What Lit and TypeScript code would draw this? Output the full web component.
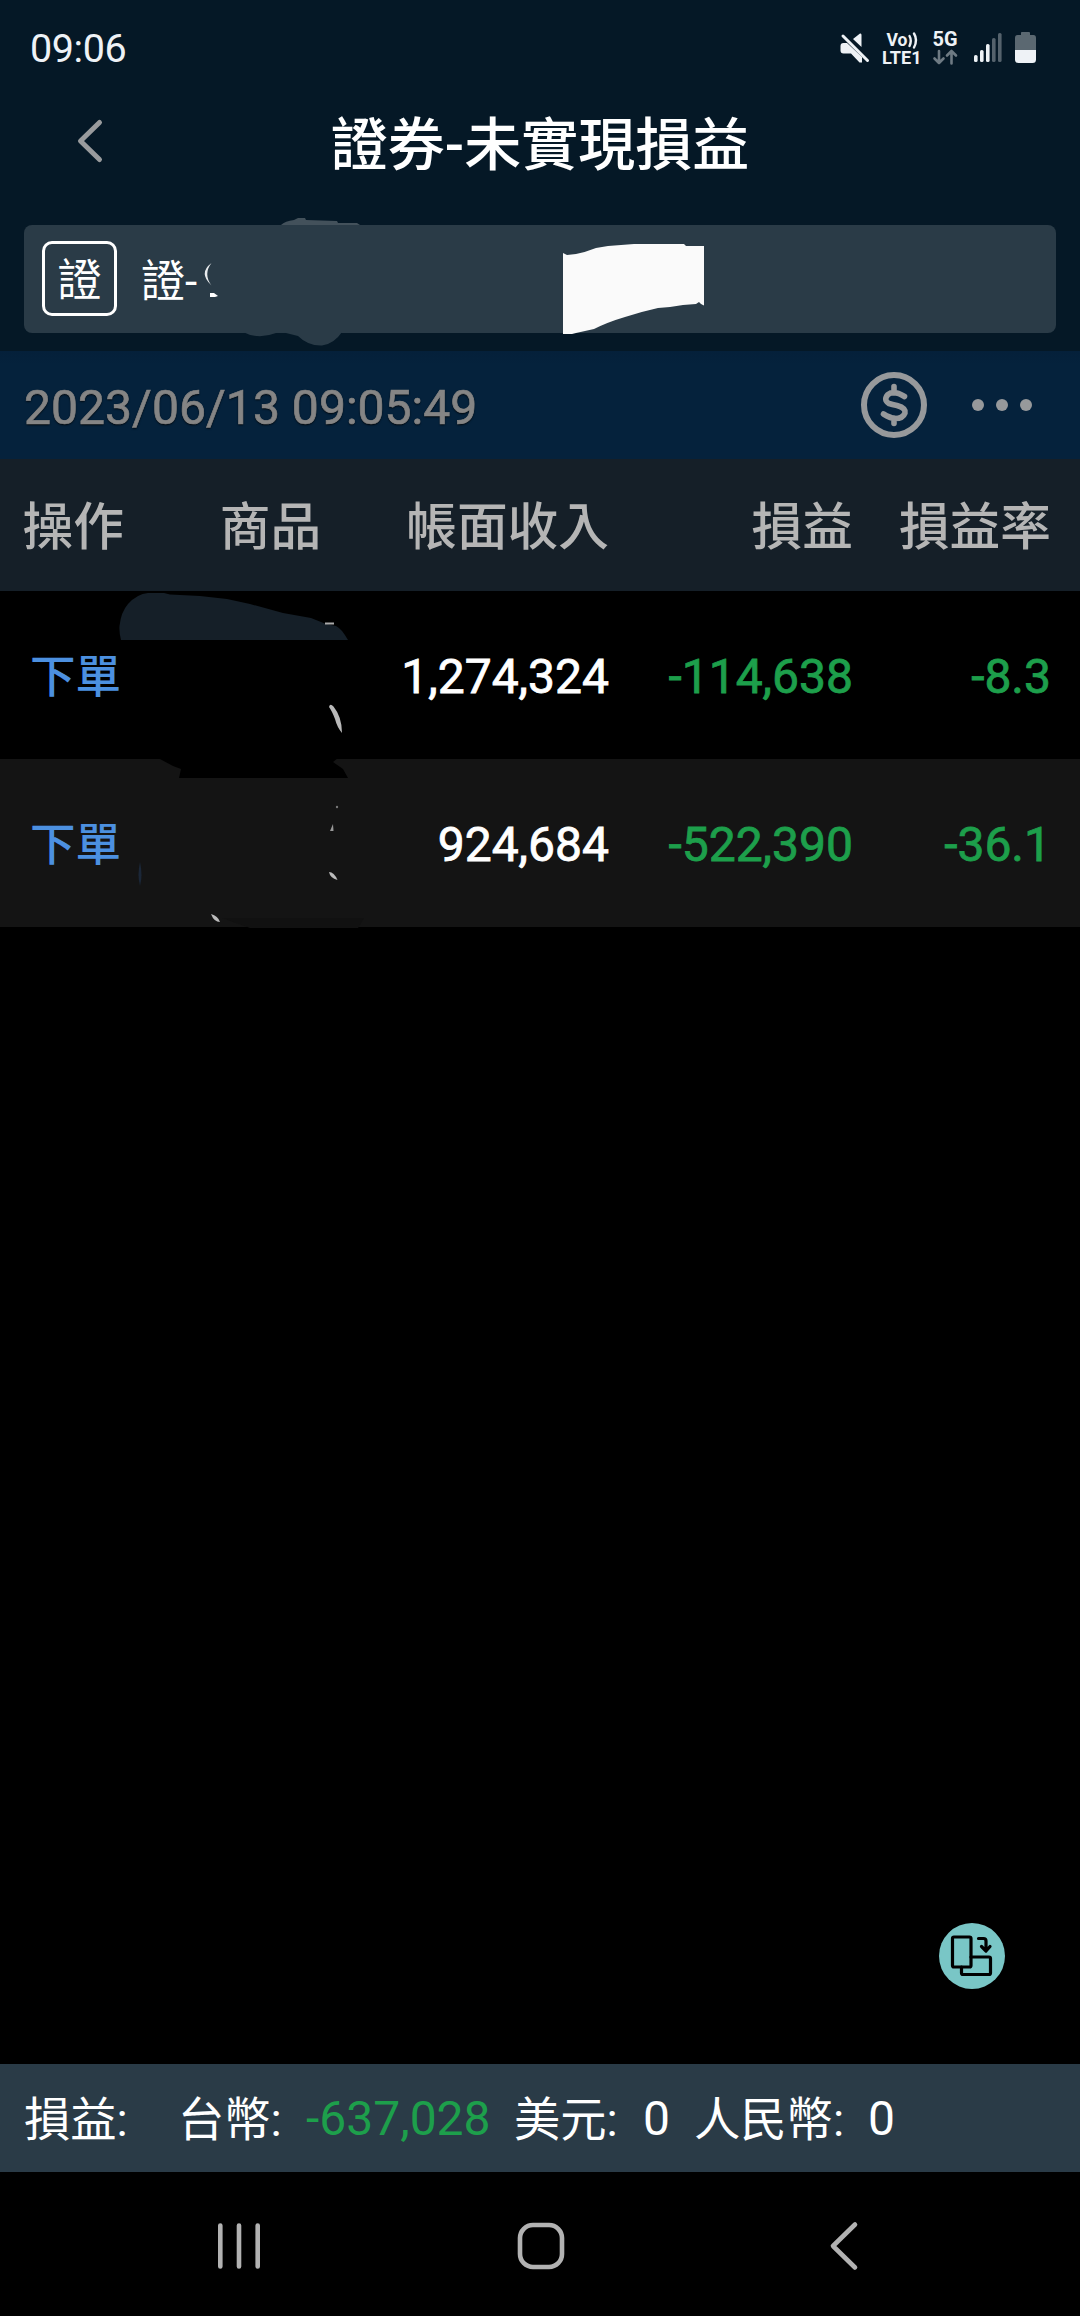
import { LitElement, html, css, svg } from "lit";
import { customElement } from "lit/decorators.js";

interface Holding {
  income: string;
  profit: string;
  rate: string;
}

const HOLDINGS: Holding[] = [
  { income: "1,274,324", profit: "-114,638", rate: "-8.3" },
  { income: "924,684", profit: "-522,390", rate: "-36.1" },
];

const BARS = [
  { x: 0, h: 7, on: true },
  { x: 6, h: 12, on: true },
  { x: 12, h: 18, on: true },
  { x: 18, h: 24, on: false },
  { x: 24, h: 29, on: false },
];

@customElement("status-bar")
export class StatusBar extends LitElement {
  static styles = css`
    :host {
      display: flex;
      height: 96px;
      box-sizing: border-box;
      padding: 2px 40px 0 30px;
      align-items: center;
      justify-content: space-between;
      color: #eef2f6;
    }
    .time {
      font-size: 39.5px;
      letter-spacing: -0.4px;
      line-height: 94px;
    }
    .icons {
      display: block;
      width: 204px;
      height: 48px;
    }
    .label {
      font-family: Roboto, sans-serif;
      font-weight: 700;
      fill: #eef2f6;
    }
  `;

  render() {
    return html`
      <span class="time">09:06</span>
      <svg class="icons" viewBox="836 26 204 48">
        <path
          fill="#eef2f6"
          d="M840.5 47 Q840.5 44 843.5 44 L847 44 L862 58 L862 63.5 L859.5 63.5 L851 54.5 L843.5 54.5 Q840.5 54.5 840.5 51.5Z M853 40 L860 34.5 Q861.5 34 861.5 36 L861.5 48Z"
        />
        <path d="M843 37 L867.5 61.5" stroke="#eef2f6" stroke-width="3" stroke-linecap="round" />
        <text class="label" x="886.5" y="47.3" font-size="18" textLength="21" lengthAdjust="spacingAndGlyphs">Vo</text>
        <path
          d="M909.5 37 Q912 41.5 909.5 47 M914 34.5 Q918 41 914 48.5"
          fill="none"
          stroke="#eef2f6"
          stroke-width="2.4"
          stroke-linecap="round"
        />
        <text class="label" x="882" y="64.500" font-size="18" textLength="39.5" lengthAdjust="spacingAndGlyphs">LTE1</text>
        <text class="label" x="932.5" y="47.3" font-size="19.5" textLength="25" lengthAdjust="spacingAndGlyphs">5G</text>
        <path
          d="M939 52 V64 M934.5 59.5 L939 64 L943.5 59.5 M951.500 64.500 V52 M947 56.500 L951.500 52 L956 56.500"
          fill="none"
          stroke="#6e7a83"
          stroke-width="2.6"
          stroke-linecap="round"
          stroke-linejoin="round"
        />
        ${BARS.map(
          (b) => svg`<rect x=${974 + b.x} y=${63 - b.h} width="3.600" height=${b.h} rx="1.6"
            fill=${b.on ? "#eef2f6" : "#55626c"} />`
        )}
        <path
          fill="#5b6871"
          d="M1021 33.500 Q1021 33 1022 33 L1029 33 Q1030 33 1030 34 L1030 36 L1033.500 36 Q1036 36 1036 39 L1036 52 L1015 52 L1015 39 Q1015 36 1017.500 36 L1021 36Z"
        />
        <path fill="#eef2f6" d="M1015 51 H1036 V60.500 Q1036 64 1032.500 64 H1018.500 Q1015 64 1015 60.500Z" />
      </svg>
    `;
  }
}

@customElement("app-root")
export class AppRoot extends LitElement {
  static styles = css`
    :host {
      display: flex;
      flex-direction: column;
      width: 1080px;
      height: 2316px;
      overflow: hidden;
      background: #000;
      color: #fff;
      font-family: Roboto, "Noto Sans CJK TC", sans-serif;
    }
    svg {
      display: block;
      overflow: visible;
    }
    .top {
      height: 351px;
      background: #051826;
    }
    .titlebar {
      display: grid;
      grid-template-columns: 180px 1fr 180px;
      align-items: center;
      height: 90px;
    }
    .back {
      justify-self: center;
      width: 30px;
      height: 46px;
    }
    .title {
      margin: 0;
      padding-top: 9px;
      text-align: center;
      font-size: 57px;
      font-weight: 500;
      line-height: 81px;
      white-space: nowrap;
    }
    .account {
      position: relative;
      display: flex;
      align-items: center;
      gap: 24px;
      height: 108px;
      margin: 39px 24px 0;
      padding-left: 18px;
      box-sizing: border-box;
      border-radius: 8px;
      background: #2a3b47;
    }
    .badge {
      display: grid;
      place-items: center;
      width: 75px;
      height: 75px;
      box-sizing: border-box;
      padding-top: 5px;
      margin-bottom: 1px;
      border: 3px solid #fff;
      border-radius: 10px;
      font-size: 44px;
      line-height: 60px;
    }
    .name {
      padding-top: 6px;
      font-size: 44px;
      line-height: 75px;
    }
    .patches {
      position: absolute;
      left: -24px;
      top: -225px;
      width: 1080px;
      height: 360px;
    }
    .stamp {
      display: flex;
      align-items: center;
      height: 108px;
      padding: 0 48px 0 24px;
      background: linear-gradient(#05203a, #05223c 14px);
      color: #858585;
    }
    .date {
      flex: 1;
      padding-top: 4px;
      font-size: 48.1px;
      text-shadow: 0 1px 2px #000;
      -webkit-text-stroke: 0.7px #858585;
    }
    .dollar {
      width: 66px;
      height: 66px;
      margin-right: 45px;
    }
    .dots {
      width: 60px;
      height: 12px;
    }
    .row {
      display: grid;
      grid-template-columns: 149px 243px 217px 244px 198px;
      align-items: center;
      height: 168px;
      text-align: right;
      font-size: 48px;
      white-space: nowrap;
    }
    .row.alt {
      background: #141414;
    }
    .row.head {
      height: 127px;
      padding-bottom: 5px;
      background: #151f28;
      color: #b5b5b5;
      font-size: 50.700px;
      font-weight: 500;
    }
    .op {
      padding-left: 22.500px;
      text-align: left;
    }
    .link {
      padding: 0 0 4px 30px;
      text-align: left;
      font-size: 45.500px;
      font-weight: 500;
      color: #4c90e0;
    }
    .product {
      text-align: center;
    }
    .num {
      padding-top: 3px;
      -webkit-text-stroke: 0.8px currentColor;
    }
    .down {
      color: #1d9f4b;
    }
    .table {
      position: relative;
      flex: 1;
    }
    .masks {
      position: absolute;
      left: 0;
      top: 0;
      width: 1080px;
      height: 480px;
    }
    .float {
      position: absolute;
      left: 939px;
      top: 1464px;
      width: 66px;
      height: 66px;
    }
    .totals {
      display: grid;
      grid-template-columns: 154px 128px 208px 129px 51px 174px 60px;
      align-items: center;
      height: 103px;
      padding: 0 0 5px 24px;
      background: #2a3b47;
      font-size: 46.300px;
      white-space: nowrap;
    }
    .amount {
      padding-top: 6px;
      font-size: 48px;
    }
    .nav {
      height: 144px;
      display: flex;
      align-items: center;
    }
    .nav svg {
      width: 1080px;
      height: 144px;
    }
  `;

  private renderMasks() {
    return html`<svg class="masks" viewBox="0 459 1080 480">
      <path
        fill="#151f28"
        d="M121 640 Q119 632 119.500 626 Q121 612 128 604 Q137 594 148 593 L164 593 L170 594.500 L200 596 L227 599 L250 604 L283 613 L311 618 L326 624 L336 626 Q341 628 348 640Z"
      />
      <path d="M325 623.500 H334" fill="none" stroke="#aaa" stroke-width="2" />
      <path fill="#000" d="M158 758 L173 766 L181 769 L179 778 L348 778 L343 769 L333 762 L338 758Z" />
      <path fill="#b9b9b9" d="M329 707 Q330 703 333.500 706.500 Q342 717 342 733 Q337 727 335 719 Q332 711 329 707Z" />
      <circle cx="337" cy="807" r="1.200" fill="#777" />
      <path fill="#999" d="M333 824 L333.500 831 L330 831Z" />
      <path fill="#bbb" d="M329 872 Q334 872 337.500 880 Q330 878 329 872Z" />
      <path fill="#bbb" d="M211 914 Q218 916 220 922 Q214 922 211 914Z" />
      <path fill="#1b2738" d="M140 862 Q143 875 140 886 Q137 875 140 862Z" />
      <path fill="#111" d="M222 918 H364 L358 928 H250Z" />
    </svg>`;
  }

  render() {
    return html`
      <header class="top">
        <status-bar></status-bar>
        <div class="titlebar">
          <svg class="back" viewBox="0 0 30 46">
            <path
              d="M24.500 4.500 L5.500 23 L24.500 41.500"
              fill="none"
              stroke="#999b9d"
              stroke-width="5"
              stroke-linecap="round"
              stroke-linejoin="round"
            />
          </svg>
          <h1 class="title">證券-未實現損益</h1>
        </div>
        <div class="account">
          <span class="badge">證</span>
          <span class="name">證-</span>
          <svg class="patches" viewBox="0 0 1080 360">
            <path fill="#43515b" d="M281 225 Q285 221 294 220 L298 218 L305 218 L306 220 L337 221 L338 223 L357 223 L360 225Z" />
            <path fill="#2a3b47" d="M243 332 Q258 340 276 333 L282 332 L298 336 Q308 346 322 345.500 Q334 344 342 332Z" />
            <path fill="#e8ebed" d="M211.500 263 Q198 273 211.500 285.500 Q203 274 211.500 263Z" />
            <path fill="#fff" d="M210 293 H214 L218 296 L215 297 H210Z" />
            <path
              fill="#fafafa"
              d="M563 253 L567 255 L576 254 Q586 252 596 248 L608 246 L634 244 L684 244 L686 246 L704 246 V305.500 L701 304 L699 302 L696 304 L683 305 L670 307 L658 308 Q640 312 625 317 Q608 322 594 329 L576 333 L572 334 H563Z"
            />
          </svg>
        </div>
      </header>
      <div class="stamp">
        <span class="date">2023/06/13 09:05:49</span>
        <svg class="dollar" viewBox="0 0 66 66">
          <circle cx="33" cy="33" r="30" fill="none" stroke="#97999b" stroke-width="6" />
          <path
            d="M33 14.500 V21 M33 46 V51.500 M43.500 24.500 Q33 18 27 22.500 Q22 28 28 31.500 Q31 32.500 36 33.500 Q45 36 44 41 Q42 46.500 34 46.500 Q29 46 22.500 42"
            fill="none"
            stroke="#97999b"
            stroke-width="5.600"
            stroke-linecap="round"
            stroke-linejoin="round"
          />
        </svg>
        <svg class="dots" viewBox="0 0 60 12" fill="#97999b">
          <circle cx="6" cy="6" r="6" />
          <circle cx="30" cy="6" r="6" />
          <circle cx="54" cy="6" r="6" />
        </svg>
      </div>
      <main class="table">
        <div class="row head">
          <span class="op">操作</span>
          <span class="product">商品</span>
          <span>帳面收入</span>
          <span>損益</span>
          <span>損益率</span>
        </div>
        ${HOLDINGS.map(
          (h, i) => html`<div class="row ${i % 2 ? "alt" : ""}">
            <span class="link">下單</span>
            <span></span>
            <span class="num">${h.income}</span>
            <span class="num down">${h.profit}</span>
            <span class="num down">${h.rate}</span>
          </div>`
        )}
        ${this.renderMasks()}
        <svg class="float" viewBox="0 0 66 66">
          <circle cx="33" cy="33" r="33" fill="#79c6c6" />
          <g fill="none" stroke="#000" stroke-width="3.200" stroke-linecap="round" stroke-linejoin="round">
            <rect x="13.500" y="14" width="18.500" height="30" rx="1.500" />
            <path d="M32 34 H50 Q51.500 34 51.500 35.500 V50 Q51.500 51.500 50 51.500 H24 Q22.500 51.500 22.500 50 V44" />
            <path d="M39.500 15.500 H44.500 Q47 15.500 47 18 V27 M42.500 23.500 L47 28 L51 23.500" />
          </g>
        </svg>
      </main>
      <footer class="totals">
        <span>損益:</span>
        <span>台幣:</span>
        <span class="amount down">-637,028</span>
        <span>美元:</span>
        <span class="amount">0</span>
        <span>人民幣:</span>
        <span class="amount">0</span>
      </footer>
      <nav class="nav">
        <svg viewBox="0 2172 1080 144" fill="none" stroke="#b2b2b2" stroke-width="4.600" stroke-linecap="round" stroke-linejoin="round">
          <path d="M220.300 2225.500 V2266.500 M239 2225.500 V2266.500 M257.700 2225.500 V2266.500" />
          <rect x="520" y="2225" width="42" height="42" rx="13" />
          <path d="M855 2224.500 L833 2246 L855 2267.500" />
        </svg>
      </nav>
    `;
  }
}
